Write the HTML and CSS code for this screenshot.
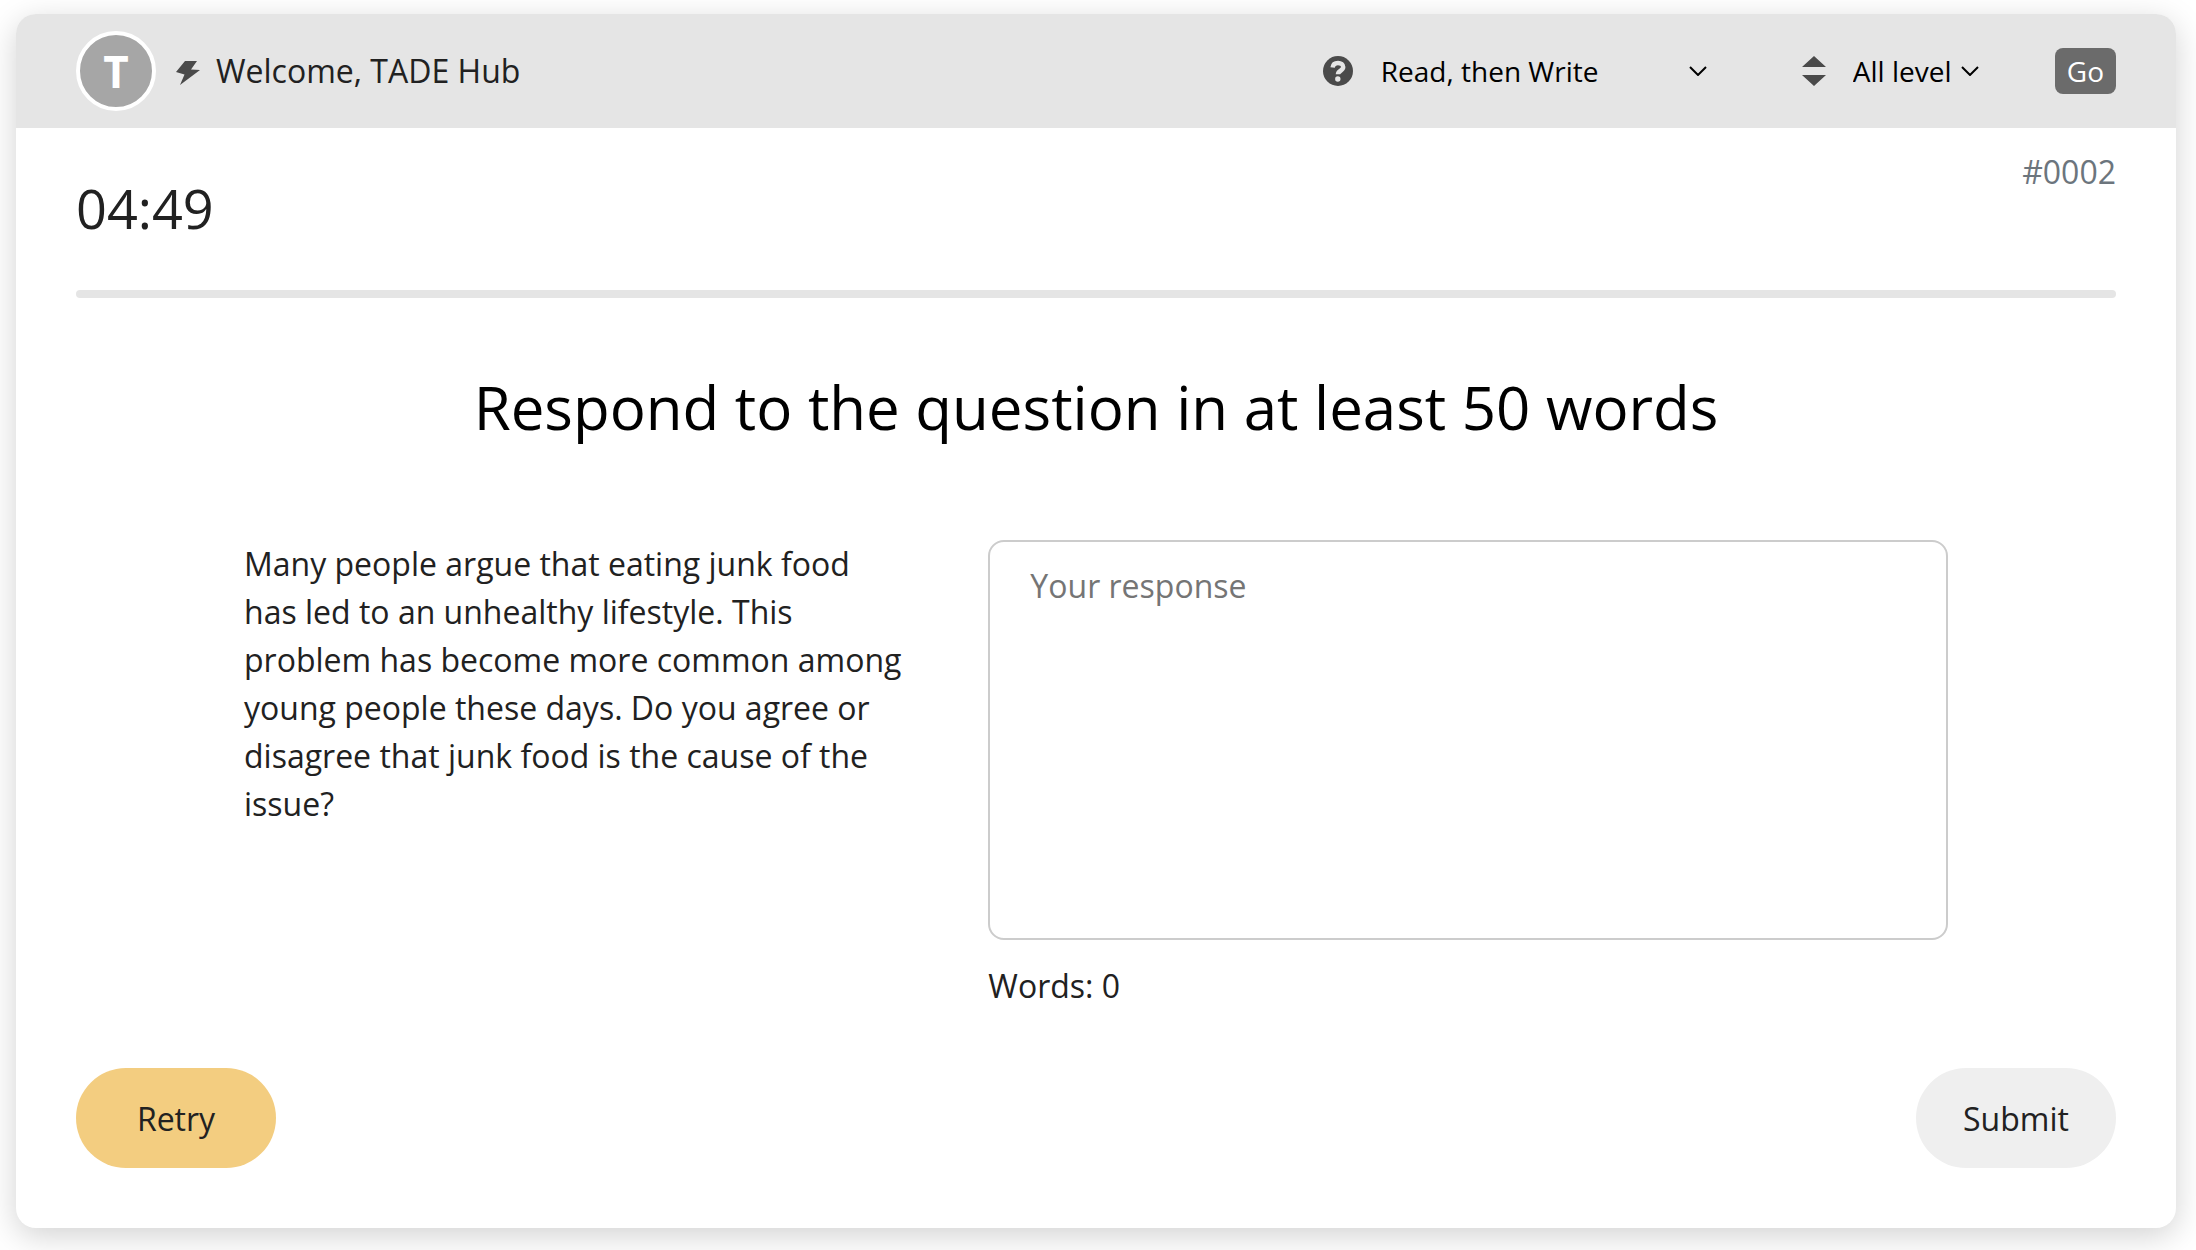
FILE: index.html
```html
<!DOCTYPE html>
<html lang="en">
<head>
<meta charset="utf-8">
<meta name="viewport" content="width=device-width, initial-scale=1">
<title>Read, then Write</title>
<link rel="stylesheet" href="styles.css">
</head>
<body>
<main class="card">
  <header class="topbar">
    <span class="avatar">T</span>
    <svg class="bolt" viewBox="0 0 24 26" aria-hidden="true"><path d="M9 1h12l-6 8.500 9 .5L4 25l4.500-10.500L0 12z"/></svg>
    <span class="welcome">Welcome, TADE Hub</span>
    <form class="filters">
      <label class="icon" for="task" aria-label="Task type">
        <svg viewBox="0 0 30 30" aria-hidden="true"><circle cx="15" cy="15" r="15"/><path class="mark" stroke-width="4.500" d="M9.600 11.500C10 8.500 12 7 15 7c3 0 5.200 1.600 5.200 4.100 0 3.900-5.200 3.400-5.200 7.200"/><circle class="dot" cx="14.800" cy="23" r="2.700"/></svg>
      </label>
      <span class="picker picker-task">
        <select id="task"><option>Read, then Write</option></select>
        <svg viewBox="0 0 18 10" aria-hidden="true"><path d="M1 1l8 8 8-8"/></svg>
      </span>
      <label class="icon" for="level" aria-label="Level">
        <svg viewBox="0 0 30 30" aria-hidden="true"><path d="M15 0l12 11H3zM15 30L3 19h24z"/></svg>
      </label>
      <span class="picker picker-level">
        <select id="level"><option>All level</option></select>
        <svg viewBox="0 0 18 10" aria-hidden="true"><path d="M1 1l8 8 8-8"/></svg>
      </span>
      <button class="go" type="button">Go</button>
    </form>
  </header>
  <div class="content">
    <div class="status">
      <span class="timer">04:49</span>
      <span class="number">#0002</span>
    </div>
    <hr class="rule">
    <h1>Respond to the question in at least 50 words</h1>
    <section class="task">
      <p class="question">Many people argue that eating junk food has led to an unhealthy lifestyle. This problem has become more common among young people these days. Do you agree or disagree that junk food is the cause of the issue?</p>
      <div class="answer">
        <textarea placeholder="Your response" aria-label="Your response"></textarea>
        <p class="count">Words: 0</p>
      </div>
    </section>
    <footer class="actions">
      <button class="pill retry" type="button">Retry</button>
      <button class="pill submit" type="button">Submit</button>
    </footer>
  </div>
</main>
</body>
</html>
```
FILE: styles.css
```css
* {
  box-sizing: border-box;
}

body {
  margin: 0;
  padding: 14px 20px 22px 16px;
  background: #fff;
  color: #212121;
  font: 32px/48px "Open Sans", "Noto Sans", sans-serif;
}

.card {
  overflow: hidden;
  border-radius: 20px;
  background: #fff;
  box-shadow: 0 8px 32px rgba(0, 0, 0, 0.18);
}

.topbar {
  display: flex;
  align-items: center;
  height: 114px;
  padding: 0 60px;
  background: #e5e5e5;
}

.avatar {
  display: grid;
  place-items: center;
  width: 80px;
  height: 80px;
  border: 4px solid #fff;
  border-radius: 50%;
  background: #a6a6a6;
  color: #fff;
  font-size: 44px;
  font-weight: 700;
}

.bolt {
  width: 24px;
  height: 26px;
  margin: 4px 16px 0 20px;
  fill: #4a4a4a;
}

.filters {
  display: flex;
  align-items: center;
  margin-left: auto;
}

.icon,
.icon svg {
  display: block;
  width: 30px;
  height: 30px;
  fill: #4a4a4a;
}

.icon .mark {
  fill: none;
  stroke: #e5e5e5;
}

.icon .dot {
  fill: #e5e5e5;
}

.picker {
  display: grid;
  align-items: center;
  margin-left: 28px;
}

.picker > * {
  grid-area: 1 / 1;
}

.picker svg {
  width: 18px;
  height: 10px;
  justify-self: end;
  fill: none;
  stroke: #000;
  stroke-width: 2;
  pointer-events: none;
}

.picker-task {
  width: 326px;
  margin-right: 92px;
}

.picker-level {
  width: 126px;
  margin-right: 76px;
  margin-left: 24px;
}

select {
  width: 100%;
  margin: 0;
  padding: 0;
  border: 0;
  appearance: none;
  background: transparent;
  color: #000;
  font-family: inherit;
  font-size: 28px;
  line-height: 40px;
}

button {
  border: 0;
  font-family: inherit;
}

.go {
  padding: 3px 12px;
  border-radius: 8px;
  background: #6b6b6b;
  color: #fff;
  font-size: 28px;
  line-height: 40px;
}

.content {
  padding: 20px 60px 60px;
}

.status {
  display: flex;
  justify-content: space-between;
  height: 142px;
}

.timer {
  padding-top: 20px;
  font-size: 54px;
  line-height: 80px;
}

.number {
  color: #6c757d;
}

.rule {
  height: 8px;
  margin: 0;
  border: 0;
  border-radius: 4px;
  background: #e5e5e5;
}

h1 {
  margin: 64px 0 88px;
  color: #000;
  font-size: 60px;
  font-weight: 400;
  line-height: 90px;
  text-align: center;
}

.task {
  display: grid;
  grid-template-columns: 9fr 13fr;
  gap: 80px;
  padding: 0 168px;
}

p {
  margin: 0;
}

textarea {
  display: block;
  width: 100%;
  height: 400px;
  padding: 20px 40px;
  border: 2px solid #ccc;
  border-radius: 16px;
  background: #fff;
  color: inherit;
  font: inherit;
  resize: none;
}

textarea::placeholder {
  color: #757575;
}

.count {
  margin-top: 22px;
}

.actions {
  display: flex;
  justify-content: space-between;
  margin-top: 58px;
}

.pill {
  width: 200px;
  height: 100px;
  border-radius: 50px;
  color: #212121;
  font-size: 32px;
}

.retry {
  background: #f3cd80;
}

.submit {
  background: #efefef;
}
```
